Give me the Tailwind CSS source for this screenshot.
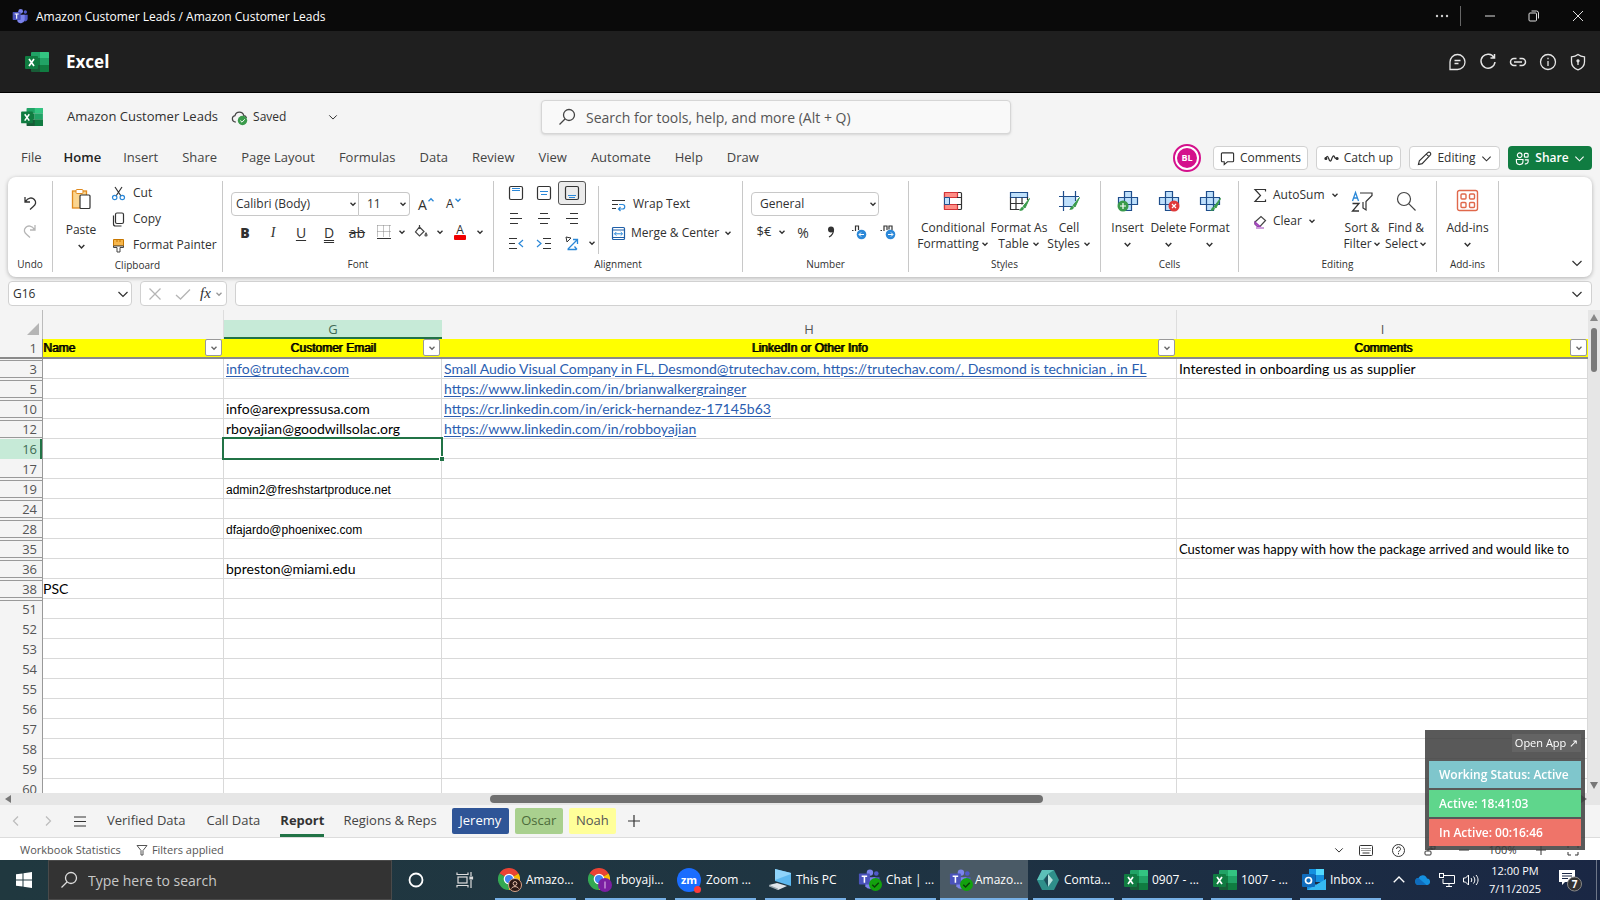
<!DOCTYPE html>
<html lang="en">
<head>
<meta charset="utf-8">
<title>Amazon Customer Leads</title>
<script src="https://cdn.jsdelivr.net/npm/@tailwindcss/browser@4"></script>
</head>
<body class="font-['Open_Sans','Noto_Sans',sans-serif] text-[12px] text-[#303030] bg-[#f4f4f4]">
<svg class="hidden" xmlns="http://www.w3.org/2000/svg">
  <symbol id="cv" viewBox="0 0 8 8"><path d="M1.5 2.7 4 5.3 6.5 2.7" fill="none" stroke="currentColor" stroke-width="1.3"/></symbol>
  <symbol id="chev" viewBox="0 0 12 12"><path d="M1.5 4 6 8.5 10.500 4" fill="none" stroke="currentColor" stroke-width="1.200"/></symbol>
  <symbol id="find" viewBox="0 0 20 20"><g fill="none" stroke="currentColor" stroke-width="1.300"><circle cx="12" cy="8" r="5.500"/><path d="M8 12 2.500 17.500"/></g></symbol>
  <symbol id="excel" viewBox="0 0 24 22">
    <path d="M7 1h16a1 1 0 0 1 1 1v5H6V2a1 1 0 0 1 1-1z" fill="#21a366"/><path d="M15 1h8a1 1 0 0 1 1 1v5h-9z" fill="#33c481"/>
    <path d="M6 7h9v7H6z" fill="#107c41"/><path d="M15 7h9v7h-9z" fill="#21a366"/><path d="M6 14h18v6a1 1 0 0 1-1 1H7a1 1 0 0 1-1-1z" fill="#185c37"/><path d="M15 14h9v6a1 1 0 0 1-1 1h-8z" fill="#107c41"/>
    <rect x="0" y="5" width="13" height="13" rx="1" fill="#107c41"/><path d="M4 8l5 7M9 8l-5 7" stroke="#fff" stroke-width="1.700"/>
  </symbol>
  <symbol id="teams" viewBox="0 0 24 24">
    <circle cx="13" cy="5" r="3.500" fill="#7b83eb"/><circle cx="20" cy="6" r="2.500" fill="#5059c9"/>
    <path d="M16 10h7.500v6a4 4 0 0 1-6 3.500z" fill="#5059c9"/><path d="M8 10h11v7a6 6 0 0 1-11 3z" fill="#7b83eb"/>
    <rect x="1" y="6" width="12" height="12" rx="1" fill="#4b53bc"/><path d="M4 9h6M7 9v7" stroke="#fff" stroke-width="1.700"/>
  </symbol>
  <symbol id="ok" viewBox="0 0 14 14"><circle cx="7" cy="7" r="7" fill="#13a10e"/><path d="M3.500 7.200 6 9.600 10.500 5" fill="none" stroke="#0b3d0a" stroke-width="1.500"/></symbol>
  <symbol id="chrome" viewBox="0 0 24 24">
    <path d="M12 12 1.600 6A12 12 0 0 1 22.400 6z" fill="#ea4335"/><path d="M12 12 22.400 6A12 12 0 0 1 12 24z" fill="#fbbc04"/><path d="M12 12V24A12 12 0 0 1 1.600 6z" fill="#34a853"/>
    <circle cx="12" cy="12" r="5.800" fill="#fff"/><circle cx="12" cy="12" r="4.500" fill="#4285f4"/>
  </symbol>
  <symbol id="cross" viewBox="0 0 24 24"><path d="M8.500 2.500h7v6h6v7h-6v6h-7v-6h-6v-7h6z" fill="#bfe0fb"/><path d="M8.500 2.500h7v19h-7zM2.500 8.500h19v7h-19z" fill="none" stroke="#1f4e8c" stroke-width="1.200"/></symbol>
  <symbol id="brush" viewBox="0 0 12 14"><path d="M11.500 0.500 5 8.500 7 10z" fill="#3a9b4b" stroke="#3a9b4b"/><path d="M1 13c1.500-.5 1-4 3.500-4 2 0 2.500 4-3.500 4z" fill="#3a9b4b"/></symbol>
</svg>

<div class="flex h-screen w-full flex-col overflow-hidden">

  <!-- Window title bar -->
  <header class="flex h-[31px] shrink-0 items-center bg-[#0a0a0a] text-white">
    <svg class="ml-3 mt-px size-4"><use href="#teams"/></svg>
    <span class="ml-2 mt-[2px] text-[12px]">Amazon Customer Leads / Amazon Customer Leads</span>
    <div class="ml-auto flex h-full items-center">
      <button aria-label="More" class="flex w-9 justify-center"><svg class="h-4 w-4" viewBox="0 0 16 16" fill="#ccc"><circle cx="3" cy="8" r="1.200"/><circle cx="8" cy="8" r="1.200"/><circle cx="13" cy="8" r="1.200"/></svg></button>
      <span class="mr-[7px] h-5 w-px bg-[#666]"></span>
      <button aria-label="Minimize" class="flex w-11 justify-center"><svg class="h-4 w-4" viewBox="0 0 16 16"><path d="M3 8h10" stroke="#ddd"/></svg></button>
      <button aria-label="Restore" class="flex w-11 justify-center"><svg class="h-4 w-4" viewBox="0 0 16 16" fill="none" stroke="#ddd"><rect x="3" y="5" width="7.500" height="8" rx="1"/><path d="M5.500 3h5a2 2 0 0 1 2 2v5.500"/></svg></button>
      <button aria-label="Close" class="flex w-11 justify-center"><svg class="h-4 w-4" viewBox="0 0 16 16"><path d="M3 3l10 10M13 3 3 13" stroke="#ddd"/></svg></button>
    </div>
  </header>

  <!-- App header -->
  <div class="flex h-[62px] shrink-0 items-center border-b border-black bg-[#1f1f1f] text-white">
    <svg class="ml-[25px] h-[22px] w-6"><use href="#excel"/></svg>
    <h1 class="ml-[17px] text-[17px] font-bold">Excel</h1>
    <div class="ml-auto mr-[11px] flex gap-[8px] text-[#e6e6e6]">
      <button aria-label="Chat" class="size-[22px]"><svg viewBox="0 0 22 22" fill="none" stroke="currentColor" stroke-width="1.300"><path d="M3 18.500V11A7.500 7.500 0 1 1 10.500 18.500zM7.500 9.500h6M7.500 12.500h4"/></svg></button>
      <button aria-label="Refresh" class="size-[22px]"><svg viewBox="0 0 22 22" fill="none" stroke="currentColor" stroke-width="1.500"><path d="M17 6.500A7 7 0 1 0 18 11M17.500 3v4h-4"/></svg></button>
      <button aria-label="Copy link" class="size-[22px]"><svg viewBox="0 0 22 22" fill="none" stroke="currentColor" stroke-width="1.500"><path d="M9.500 7.500H7a3.500 3.500 0 0 0 0 7h2.500M12.500 7.500H15a3.500 3.500 0 0 1 0 7h-2.500M7 11h8"/></svg></button>
      <button aria-label="About" class="size-[22px]"><svg viewBox="0 0 22 22" fill="none" stroke="currentColor" stroke-width="1.300"><circle cx="11" cy="11" r="7.500"/><path d="M11 10v5M11 6.800v1.500"/></svg></button>
      <button aria-label="Privacy" class="size-[22px]"><svg viewBox="0 0 22 22" fill="none" stroke="currentColor" stroke-width="1.300"><path d="M11 3.500c2 1.700 4 2.300 6.500 2.300V11c0 4-2.500 6.300-6.500 7.800C7 17.300 4.500 15 4.500 11V5.800C7 5.800 9 5.200 11 3.500z"/><circle cx="11" cy="9.800" r="1" fill="currentColor"/><path d="M11 10v4"/></svg></button>
    </div>
  </div>

  <!-- Document title and search -->
  <div class="flex h-12 shrink-0 items-center">
    <div class="flex min-w-0 flex-1 items-center">
      <svg class="ml-[21px] h-5 w-[22px] shrink-0"><use href="#excel"/></svg>
      <span class="ml-6 whitespace-nowrap text-[13px]">Amazon Customer Leads</span>
      <svg class="ml-[13px] h-[17px] w-[17px] shrink-0" viewBox="0 0 17 17"><path d="M5 13H4a3.200 3.200 0 0 1 0-6.300 4.500 4.500 0 0 1 8.800 0A3 3 0 0 1 15.500 9" fill="none" stroke="#444" stroke-width="1.200"/><circle cx="11.500" cy="11.500" r="4.700" fill="#3a9b4b"/><path d="M9.300 11.600 11 13.200l2.700-2.900" fill="none" stroke="#fff"/></svg>
      <span class="ml-[5px] text-[12px]">Saved</span>
      <button aria-label="Document options" class="ml-[42px]"><svg class="size-[10px]"><use href="#chev"/></svg></button>
    </div>
    <label class="flex h-[34px] w-[470px] items-center rounded border border-[#d6d6d6] bg-[#f9f9f9] pl-[15px] shadow-sm">
      <svg class="size-5 text-[#444]"><use href="#find"/></svg>
      <input type="text" aria-label="Search" placeholder="Search for tools, help, and more (Alt + Q)" class="ml-[9px] flex-1 bg-transparent text-[14px] outline-none placeholder:text-[#555]">
    </label>
    <div class="flex-1"></div>
    <div class="w-12"></div>
  </div>

  <!-- Ribbon tabs -->
  <div class="mt-px flex h-8 shrink-0 items-center">
    <nav class="ml-[21px] flex gap-6 whitespace-nowrap text-[13px] text-[#444]">
      <a href="#">File</a><a href="#" class="-mx-[2px] font-semibold text-[#222]">Home</a><a href="#">Insert</a><a href="#">Share</a><a href="#">Page Layout</a><a href="#">Formulas</a><a href="#">Data</a><a href="#">Review</a><a href="#">View</a><a href="#">Automate</a><a href="#">Help</a><a href="#">Draw</a>
    </nav>
    <div class="ml-auto mr-2 flex items-center gap-2 text-[12px]">
      <span class="mr-1 flex size-7 items-center justify-center rounded-full border-2 border-[#d4118c] bg-white"><span class="flex size-5 items-center justify-center rounded-full bg-[#d4118c] text-[9px] font-bold text-white">BL</span></span>
      <button class="flex h-6 w-[95px] items-center justify-center gap-[5px] rounded border border-[#d1d1d1] bg-white"><svg class="size-[15px]" viewBox="0 0 16 16" fill="none" stroke="currentColor" stroke-width="1.200"><path d="M2.500 2h11a1 1 0 0 1 1 1v7.500a1 1 0 0 1-1 1H8L4.500 14.500v-3h-2a1 1 0 0 1-1-1V3a1 1 0 0 1 1-1z"/></svg>Comments</button>
      <button class="flex h-6 w-[85px] items-center justify-center gap-[5px] rounded border border-[#d1d1d1] bg-white"><svg class="size-[15px]" viewBox="0 0 16 16" fill="none" stroke="currentColor" stroke-width="1.300"><path d="M2 8c1-3 2-3 3 0s2 4 3 1 2-5 3-3 1 2 3 2"/><circle cx="2" cy="8" r="1" fill="currentColor"/><circle cx="14" cy="8" r="1" fill="currentColor"/></svg>Catch up</button>
      <button class="flex h-6 w-[91px] items-center justify-center gap-[5px] rounded border border-[#d1d1d1] bg-white"><svg class="size-[15px]" viewBox="0 0 16 16" fill="none" stroke="currentColor" stroke-width="1.200"><path d="M1.500 14.500l1-4L11.500 1.800a1.800 1.800 0 0 1 2.600 2.600L5.500 13.500zM10 3.300l2.700 2.700"/></svg>Editing<svg class="size-[11px]"><use href="#chev"/></svg></button>
      <button class="flex h-6 w-[84px] items-center justify-center gap-[5px] rounded bg-[#107c41] font-semibold text-white"><svg class="size-[15px]" viewBox="0 0 16 16" fill="none" stroke="currentColor" stroke-width="1.200"><circle cx="5" cy="4.500" r="2.500"/><rect x="10" y="2.500" width="4" height="4" rx="1"/><path d="M1.500 9h7v2a3.500 3.500 0 0 1-7 0zM10.500 9.500H14v2a2.500 2.500 0 0 1-3.500 2"/></svg>Share<svg class="size-[11px]"><use href="#chev"/></svg></button>
    </div>
  </div>

  <!-- Ribbon -->
  <section class="mx-2 mt-[3px] flex h-[100px] shrink-0 rounded-lg bg-white pb-[5px] pt-1 text-[12px] shadow-[0_1px_4px_rgba(0,0,0,0.28)]">
    <div class="flex w-[45px] flex-col items-center border-r border-[#c8c8c8] pt-2">
      <button aria-label="Undo" class="flex h-7 items-center"><svg class="h-[16px] w-[14px]" viewBox="0 0 14 16" fill="none" stroke="#333" stroke-width="1.300"><path d="M2 2v5h5M2.300 6.800C5 2.500 9 2 11.300 4.500s1.500 5-1 7L7 14.500"/></svg></button>
      <button aria-label="Redo" class="flex h-7 items-center"><svg class="h-[16px] w-[14px]" viewBox="0 0 14 16" fill="none" stroke="#b5b5b5" stroke-width="1.300"><path d="M12 2v5H7M11.700 6.800C9 2.500 5 2 2.700 4.500s-1.500 5 1 7L7 14.500"/></svg></button>
      <span class="mt-auto text-[10px] leading-4">Undo</span>
    </div>
    <div class="flex w-[170px] flex-col border-r border-[#c8c8c8]">
      <div class="flex flex-1">
        <button class="ml-2 flex w-10 flex-col items-center pt-[7px] leading-4">
          <svg class="h-[22px] w-5" viewBox="0 0 20 22"><rect x="1.500" y="3" width="14" height="17" fill="#fbd58f" stroke="#e08a1e" stroke-width="1.300"/><rect x="5" y="1.500" width="7" height="4" rx="1" fill="#fff" stroke="#e08a1e"/><rect x="9" y="7" width="10" height="13.500" rx="1" fill="#fff" stroke="#333" stroke-width="1.200"/></svg>
          <span class="mt-3">Paste</span><svg class="mt-1 size-[9px]"><use href="#cv"/></svg>
        </button>
        <div class="ml-[10px] flex flex-col gap-[2px]">
          <button class="flex h-6 items-center gap-[7px]"><svg class="size-[15px]" viewBox="0 0 15 15" fill="none" stroke-width="1.200"><path d="M4 1l6 9M11 1 5 10" stroke="#333"/><circle cx="3.700" cy="11.500" r="2.200" stroke="#2b88d8"/><circle cx="11.300" cy="11.500" r="2.200" stroke="#2b88d8"/></svg>Cut</button>
          <button class="flex h-6 items-center gap-[7px]"><svg class="size-[15px]" viewBox="0 0 15 15" fill="none" stroke="#333" stroke-width="1.200"><rect x="4.500" y="1" width="8" height="10.500" rx="1.500"/><path d="M2.500 3.500v8.500a2 2 0 0 0 2 2h6"/></svg>Copy</button>
          <button class="flex h-6 items-center gap-[7px] whitespace-nowrap"><svg class="size-[15px]" viewBox="0 0 15 15"><path d="M2.500 1.500h10V8h-10z" fill="#f6b64b" stroke="#c77700"/><path d="M6 1v3M9 1v3" stroke="#c77700"/><path d="M2.500 8h10v1.500H9V14H6V9.500H2.500z" fill="#fff" stroke="#444"/></svg>Format Painter</button>
        </div>
      </div>
      <span class="text-center text-[10px] leading-4">Clipboard</span>
    </div>
    <div class="flex w-[271px] flex-col border-r border-[#c8c8c8]">
      <div class="flex-1 pl-2 pt-[11px]">
        <div class="flex h-6 items-center">
          <span class="relative"><select aria-label="Font" class="h-6 w-[128px] appearance-none rounded-l border border-[#c8c8c8] pl-1"><option>Calibri (Body)</option></select><svg class="absolute right-[2px] top-2 size-2"><use href="#cv"/></svg></span>
          <span class="relative"><select aria-label="Font size" class="h-6 w-[51px] appearance-none rounded-r border border-l-0 border-[#c8c8c8] pl-2"><option>11</option></select><svg class="absolute right-[3px] top-2 size-2"><use href="#cv"/></svg></span>
          <button aria-label="Increase font size" class="ml-2 flex w-[16px] items-center text-[14px]">A<svg class="mb-2 size-2 shrink-0 rotate-180 text-[#2b88d8]"><use href="#cv"/></svg></button>
          <button aria-label="Decrease font size" class="ml-3 flex w-[16px] items-center text-[12px]">A<svg class="mb-2 size-2 shrink-0 text-[#2b88d8]"><use href="#cv"/></svg></button>
        </div>
        <div class="mt-1 flex h-6 items-center text-[14px]">
          <button class="w-7 font-extrabold">B</button><button class="w-7 font-['Liberation_Serif',serif] italic">I</button><button class="w-7 underline underline-offset-2">U</button><button class="w-7 underline decoration-double underline-offset-2">D</button><button class="w-7 line-through">ab</button>
          <button aria-label="Borders" class="flex w-[26px] justify-center"><svg class="size-[14px]" viewBox="0 0 14 14" fill="none" stroke="#888"><path d="M.5 .5h13M.5 6.500h13M.5 .5v12M6.500 .5v12M12.500 .5v12" stroke-dasharray="1 1"/><path d="M0 13.500h14" stroke="#333"/></svg></button>
          <button aria-label="Border options" class="flex w-[10px] justify-center"><svg class="size-2"><use href="#cv"/></svg></button>
          <button aria-label="Fill colour" class="flex w-7 justify-center"><svg class="size-[14px]" viewBox="0 0 14 14" fill="none" stroke="#444" stroke-width="1.200"><path d="M5.500 2 10 6.500 5.500 11 1.500 7zM5.500 0v4M12 8c1.300 1.800 1.300 3 0 3s-1.300-1.200 0-3z"/></svg></button>
          <button aria-label="Fill options" class="flex w-[10px] justify-center"><svg class="size-2"><use href="#cv"/></svg></button>
          <button aria-label="Font colour" class="flex w-[30px] flex-col items-center text-[12px] leading-[11px]">A<span class="h-[5px] w-3 rounded-[1px] bg-[#f00000]"></span></button>
          <button aria-label="Font colour options" class="flex w-[10px] justify-center"><svg class="size-2"><use href="#cv"/></svg></button>
        </div>
      </div>
      <span class="text-center text-[10px] leading-4">Font</span>
    </div>
    <div class="flex w-[249px] flex-col border-r border-[#c8c8c8]">
      <div class="flex flex-1 pl-2">
        <div class="grid w-[96px] grid-cols-[28px_28px_28px_12px] content-start gap-y-px">
          <button aria-label="Top align" class="flex h-6 items-center justify-center"><svg class="size-4" viewBox="0 0 16 16" fill="none"><rect x="1.500" y="1.500" width="13" height="13" rx="1.500" stroke="#333" stroke-width="1.200"/><path d="M4 3.500h8M4 5.500h8" stroke="#2b88d8"/></svg></button>
          <button aria-label="Middle align" class="flex h-6 items-center justify-center"><svg class="size-4" viewBox="0 0 16 16" fill="none"><rect x="1.500" y="1.500" width="13" height="13" rx="1.500" stroke="#333" stroke-width="1.200"/><path d="M4 6.500h8M5 9.500h6" stroke="#2b88d8"/></svg></button>
          <button aria-label="Bottom align" class="flex h-6 items-center justify-center rounded-[3px] border border-[#555] bg-[#ebebeb]"><svg class="size-4" viewBox="0 0 16 16" fill="none"><rect x="1.500" y="1.500" width="13" height="13" rx="1.500" stroke="#333" stroke-width="1.200"/><path d="M4 10.500h8M5 12.500h6" stroke="#2b88d8"/></svg></button><span></span>
          <button aria-label="Align left" class="flex h-6 items-center justify-center"><svg class="size-[14px]" viewBox="0 0 14 14" stroke="#333"><path d="M1 2.500h8M1 7.500h12M1 12.500h8"/></svg></button>
          <button aria-label="Centre" class="flex h-6 items-center justify-center"><svg class="size-[14px]" viewBox="0 0 14 14" stroke="#333"><path d="M3 2.500h8M1 7.500h12M3 12.500h8"/></svg></button>
          <button aria-label="Align right" class="flex h-6 items-center justify-center"><svg class="size-[14px]" viewBox="0 0 14 14" stroke="#333"><path d="M5 2.500h8M1 7.500h12M5 12.500h8"/></svg></button><span></span>
          <button aria-label="Decrease indent" class="flex h-6 items-center justify-center"><svg class="size-4" viewBox="0 0 16 16" fill="none" stroke="#333"><path d="M1 3.500h8M1 8.500h6M1 13.500h8"/><path d="M15 5l-4 3.500 4 3.500" stroke="#2b88d8" stroke-width="1.200"/></svg></button>
          <button aria-label="Increase indent" class="flex h-6 items-center justify-center"><svg class="size-4" viewBox="0 0 16 16" fill="none" stroke="#333"><path d="M7 3.500h8M9 8.500h6M7 13.500h8"/><path d="M1 5l4 3.500L1 12" stroke="#2b88d8" stroke-width="1.200"/></svg></button>
          <button aria-label="Orientation" class="flex h-6 items-center justify-center"><svg class="size-4" viewBox="0 0 16 16" fill="none" stroke="#2b88d8" stroke-width="1.300"><path d="M4 14 13 5M9 4.500h4.500V9M3.500 14.500h9M10.500 11.500l2.500 3"/><path d="M2 2l5 1-4 4z" stroke="#333" stroke-width="1"/></svg></button>
          <button aria-label="Orientation options" class="flex h-6 items-center justify-center"><svg class="size-2"><use href="#cv"/></svg></button>
        </div>
        <div class="mt-[5px] h-[68px] border-l border-[#c8c8c8] pl-3 pt-[6px]">
          <button class="flex h-6 items-center gap-[7px] whitespace-nowrap"><svg class="size-[15px]" viewBox="0 0 15 15" fill="none"><path d="M1 3.500h13M1 7.500h6M1 11.500h4" stroke="#333"/><path d="M8 7.500h3.500a2.200 2.200 0 0 1 0 4.500H8M9.500 10 7.500 12l2 2" stroke="#2b88d8" stroke-width="1.200"/></svg>Wrap Text</button>
          <button class="mt-[5px] flex h-6 items-center gap-[5px] whitespace-nowrap"><svg class="size-[15px]" viewBox="0 0 15 15" fill="none"><rect x="1.500" y="1.500" width="12" height="12" rx="1" stroke="#1f5fa8" stroke-width="1.200"/><path d="M1.500 4h12M1.500 11.500h12" stroke="#1f5fa8"/><path d="M3.500 7.800h8M5.300 6 3.500 7.800l1.800 1.800M9.700 6l1.800 1.800-1.800 1.800" stroke="#2b88d8"/></svg>Merge &amp; Center<svg class="size-2"><use href="#cv"/></svg></button>
        </div>
      </div>
      <span class="text-center text-[10px] leading-4">Alignment</span>
    </div>
    <div class="flex w-[166px] flex-col border-r border-[#c8c8c8]">
      <div class="flex-1 pl-2 pt-[11px]">
        <div class="relative h-6 w-[128px]"><select aria-label="Number format" class="h-6 w-full appearance-none rounded border border-[#c8c8c8] pl-2"><option>General</option></select><svg class="absolute right-[2px] top-2 size-2"><use href="#cv"/></svg></div>
        <div class="mt-1 flex h-6 items-center text-[13px]">
          <button class="w-[26px]">$€</button><button aria-label="Currency options" class="flex w-[10px] justify-center"><svg class="size-2"><use href="#cv"/></svg></button><button class="w-8 text-[14px]">%</button>
          <button aria-label="Comma style" class="flex w-6 justify-center"><svg class="h-3 w-2" viewBox="0 0 8 12"><circle cx="4" cy="3.500" r="3" fill="#333"/><path d="M6.500 3.500C6.500 7.500 5 9.500 2 11" fill="none" stroke="#333" stroke-width="1.300"/></svg></button>
          <button aria-label="Increase decimal" class="flex w-8 justify-center"><svg class="size-4" viewBox="0 0 16 16" fill="none"><path d="M1 6.500h1.500M4.500 7v-5h3v4" stroke="#333" stroke-width="1.200"/><circle cx="10.500" cy="10.500" r="4.800" fill="#2b88d8"/><path d="M13 10.500H8.200M10 8.500l-2 2 2 2" stroke="#fff"/></svg></button>
          <button aria-label="Decrease decimal" class="flex w-[26px] justify-center"><svg class="size-4" viewBox="0 0 16 16" fill="none"><path d="M.5 6.500H2M4 7v-5h3v4M9 5.500V2h3v4" stroke="#333" stroke-width="1.200"/><circle cx="10.500" cy="10.500" r="4.800" fill="#2b88d8"/><path d="M8 10.500h4.800M11 8.500l2 2-2 2" stroke="#fff"/></svg></button>
        </div>
      </div>
      <span class="text-center text-[10px] leading-4">Number</span>
    </div>
    <div class="flex w-[192px] flex-col border-r border-[#c8c8c8]">
      <div class="flex flex-1 pl-2 pt-2 leading-4">
        <button class="flex w-[72px] flex-col items-center"><svg class="mb-[7px] size-6" viewBox="0 0 24 24"><rect x="3.500" y="3.500" width="17" height="17" rx="1" fill="#fff" stroke="#333" stroke-width="1.200"/><path d="M3.500 3.500h13v5h-13zM3.500 15.500h13v5h-13z" fill="#ff8d85" stroke="#d13438" stroke-width="1.200"/><path d="M3.500 8.500h5v7h-5z" fill="#bfe0fb" stroke="#1f4e8c"/><path d="M16 8.500h4.500M16 15.500h4.500" stroke="#333"/></svg><span>Conditional</span><span class="flex items-center gap-[2px]">Formatting<svg class="size-2"><use href="#cv"/></svg></span></button>
        <button class="flex w-[60px] flex-col items-center whitespace-nowrap"><svg class="mb-[7px] size-6" viewBox="0 0 24 24"><path d="M3.500 3.500h17v5h-17z" fill="#bfe0fb" stroke="#1f4e8c" stroke-width="1.200"/><path d="M3.500 8.500v12h9M3.500 14.500h13M9 8.500v12M15 8.500v7M20.500 8v3" fill="none" stroke="#333" stroke-width="1.200"/><use href="#brush" x="11" y="9" width="12" height="14"/></svg><span>Format As</span><span class="flex items-center gap-[3px]">Table<svg class="size-2"><use href="#cv"/></svg></span></button>
        <button class="flex w-10 flex-col items-center"><svg class="mb-[7px] size-6" viewBox="0 0 24 24"><path d="M6 8h13v9H6z" fill="#bfe0fb"/><path d="M6.500 2v20M18.500 2v10M2 7.500h20M2 17.500h13" fill="none" stroke="#1f4e8c" stroke-width="1.200"/><use href="#brush" x="11" y="8" width="12" height="14"/></svg><span>Cell</span><span class="flex items-center gap-[3px]">Styles<svg class="size-2"><use href="#cv"/></svg></span></button>
      </div>
      <span class="text-center text-[10px] leading-4">Styles</span>
    </div>
    <div class="flex w-[138px] flex-col border-r border-[#c8c8c8]">
      <div class="flex flex-1 pl-[6px] pt-2 leading-4">
        <button class="flex w-[41px] flex-col items-center"><svg class="mb-[7px] size-6" viewBox="0 0 24 24"><use href="#cross"/><circle cx="7" cy="17" r="5.500" fill="#3a9b4b"/><path d="M7 14v6M4 17h6" stroke="#fff" stroke-width="1.200"/></svg>Insert<svg class="mt-1 size-[9px]"><use href="#cv"/></svg></button>
        <button class="flex w-[41px] flex-col items-center"><svg class="mb-[7px] size-6" viewBox="0 0 24 24"><use href="#cross"/><circle cx="17" cy="17" r="5.500" fill="#e03a3a"/><path d="M15 15l4 4M19 15l-4 4" stroke="#fff" stroke-width="1.200"/></svg>Delete<svg class="mt-1 size-[9px]"><use href="#cv"/></svg></button>
        <button class="flex w-[41px] flex-col items-center"><svg class="mb-[7px] size-6" viewBox="0 0 24 24"><use href="#cross"/><use href="#brush" x="11" y="9" width="12" height="14"/></svg>Format<svg class="mt-1 size-[9px]"><use href="#cv"/></svg></button>
      </div>
      <span class="text-center text-[10px] leading-4">Cells</span>
    </div>
    <div class="flex w-[198px] flex-col border-r border-[#c8c8c8]">
      <div class="flex flex-1 pl-[14px] leading-4">
        <div class="flex w-[87px] flex-col gap-[2px] pt-[2px]">
          <button class="flex h-6 items-center gap-[6px]"><svg class="h-[15px] w-[14px]" viewBox="0 0 14 15" fill="none" stroke="#333" stroke-width="1.200"><path d="M12.500 3.500V1.500H2l5.500 6L2 13.500h10.500v-2"/></svg>AutoSum<svg class="size-2"><use href="#cv"/></svg></button>
          <button class="flex h-6 items-center gap-[6px]"><svg class="h-[15px] w-[14px]" viewBox="0 0 14 15" fill="none" stroke-width="1.200"><path d="M2 8l6-5.500 4.500 4L7 12.500H4.500L2 10z" stroke="#444"/><path d="M2 8l5 4.500H4.500L2 10zM3 14h8" fill="#c58ad6" stroke="#9b3fb5"/></svg>Clear<svg class="size-2"><use href="#cv"/></svg></button>
        </div>
        <button class="flex w-11 flex-col items-center whitespace-nowrap pt-2"><svg class="mb-[7px] size-6" viewBox="0 0 24 24" fill="none"><path d="M10 4h12v2.500l-6 6V21l-3-2v-6" stroke="#333" stroke-width="1.200"/><path d="M2.500 12 5.500 3.500 8.500 12M3.500 9h4" stroke="#2b88d8" stroke-width="1.300"/><path d="M2.500 14.500H9L2.500 22H9" stroke="#333" stroke-width="1.300"/></svg><span>Sort &amp;</span><span class="flex items-center gap-px">Filter<svg class="size-2"><use href="#cv"/></svg></span></button>
        <button class="flex w-11 flex-col items-center whitespace-nowrap pt-2"><svg class="mb-[7px] size-6" viewBox="0 0 24 24" fill="none" stroke="#444" stroke-width="1.200"><circle cx="10" cy="10" r="6.500"/><path d="M14.700 14.700 21.500 21.500"/></svg><span>Find &amp;</span><span class="flex items-center gap-px">Select<svg class="size-2"><use href="#cv"/></svg></span></button>
      </div>
      <span class="text-center text-[10px] leading-4">Editing</span>
    </div>
    <div class="flex w-[62px] flex-col border-r border-[#c8c8c8]">
      <button class="flex flex-1 flex-col items-center pt-2 leading-4"><svg class="mb-[7px] size-6" viewBox="0 0 24 24" fill="none" stroke="#e0684b" stroke-width="1.400"><rect x="1.500" y="1.500" width="20" height="20" rx="2"/><rect x="5" y="5" width="5" height="5" rx="1"/><rect x="13.500" y="5" width="5" height="5" rx="1"/><rect x="5" y="13.500" width="5" height="5" rx="1"/><rect x="13.500" y="13.500" width="5" height="5" rx="1"/></svg>Add-ins<svg class="mt-1 size-[9px]"><use href="#cv"/></svg></button>
      <span class="text-center text-[10px] leading-4">Add-ins</span>
    </div>
    <button aria-label="Collapse ribbon" class="mb-[3px] ml-auto mr-[9px] self-end"><svg class="size-3"><use href="#chev"/></svg></button>
  </section>

  <!-- Formula bar -->
  <div class="mx-2 mt-1 flex h-[25px] shrink-0">
    <div class="flex w-[124px] items-center rounded border border-[#d1d1d1] bg-white pr-[2px]"><input aria-label="Name box" value="G16" class="w-full min-w-0 pl-1 text-[12px] outline-none"><svg class="size-3 shrink-0"><use href="#chev"/></svg></div>
    <div class="ml-2 flex w-[87px] items-center rounded border border-[#d1d1d1] bg-white pl-[7px]">
      <button aria-label="Cancel"><svg class="size-[14px]" viewBox="0 0 14 14"><path d="M1.500 1.500l11 11M12.500 1.500l-11 11" stroke="#b5b5b5" stroke-width="1.300"/></svg></button>
      <button aria-label="Enter" class="ml-[13px]"><svg class="h-[14px] w-4" viewBox="0 0 16 14"><path d="M1 8l4.500 4L15 2.500" fill="none" stroke="#b5b5b5" stroke-width="1.300"/></svg></button>
      <button class="ml-[9px] font-['Liberation_Serif',serif] text-[15px] italic">fx</button>
      <svg class="ml-1 size-2 text-[#999]"><use href="#cv"/></svg>
    </div>
    <div class="ml-2 flex flex-1 items-center rounded border border-[#d1d1d1] bg-white pr-2"><input aria-label="Formula" class="h-full flex-1 outline-none"><svg class="size-3"><use href="#chev"/></svg></div>
  </div>

  <!-- Grid -->
  <main class="mt-1 flex min-h-0 flex-1">
    <div class="min-w-0 flex-1 overflow-hidden bg-white">
      <table class="w-full table-fixed border-separate border-spacing-0 whitespace-nowrap text-left font-['Lato','Open_Sans',sans-serif] text-[14px] text-black
        [&_td]:h-5 [&_td]:overflow-hidden [&_td]:border-b [&_td]:border-r [&_td]:border-[#d9d9d9] [&_td]:p-0 [&_td]:pl-[2px] [&_td]:leading-[18px]
        [&_tbody_th]:h-5 [&_tbody_th]:border-r [&_tbody_th]:border-[#999] [&_tbody_th]:bg-[#f4f4f4] [&_tbody_th]:p-0 [&_tbody_th]:font-['Open_Sans'] [&_tbody_th]:text-[13px] [&_tbody_th]:font-normal [&_tbody_th]:leading-[16px] [&_tbody_th]:text-[#555]">
        <colgroup><col class="w-[43px]"><col class="w-[181px]"><col class="w-[218px]"><col class="w-[735px]"><col></colgroup>
        <thead class="font-['Open_Sans']">
          <tr class="bg-[#f4f4f4] text-center text-[13px] leading-[18px] text-[#555]">
            <th class="h-[29px] border-r border-[#bbb] p-0 align-bottom"><svg class="mb-1 ml-auto mr-[3px] size-3" viewBox="0 0 12 12"><path d="M12 0v12H0z" fill="#b5b5b5"/></svg></th>
            <th class="border-r border-[#ddd] p-0"></th>
            <th class="p-0 align-bottom font-normal"><div class="h-[19px] border-b-2 border-[#217346] bg-[#c6ead7] text-[#3f6b55]">G</div></th>
            <th class="border-r border-[#ddd] p-0 pb-px align-bottom font-normal">H</th>
            <th class="p-0 pb-px align-bottom font-normal">I</th>
          </tr>
          <tr class="bg-[#ffff00] font-['Liberation_Sans',sans-serif] text-[12px] leading-[18px] [&>th]:h-5 [&>th]:border-b-2 [&>th]:border-[#8a8a8a] [&>th]:p-0 [&>th]:font-normal">
            <th class="border-r bg-[#f4f4f4] font-['Open_Sans'] text-[13px] text-[#555]"><div class="pr-[5px] text-right">1</div></th>
            <th><div class="flex justify-between pr-[2px]"><span class="[text-shadow:1px_0_0_#000]">Name</span><button aria-label="Filter name" class="flex size-[17px] items-center justify-center rounded-[2px] border border-[#999] bg-white text-[#666]"><svg class="size-2"><use href="#cv"/></svg></button></div></th>
            <th><div class="flex pr-[2px] text-center"><span class="flex-1 pl-[19px] [text-shadow:1px_0_0_#000]">Customer Email</span><button aria-label="Filter email" class="flex size-[17px] items-center justify-center rounded-[2px] border border-[#999] bg-white text-[#666]"><svg class="size-2"><use href="#cv"/></svg></button></div></th>
            <th><div class="flex pr-[2px] text-center"><span class="flex-1 pl-[19px] [text-shadow:1px_0_0_#000]">LinkedIn or Other Info</span><button aria-label="Filter info" class="flex size-[17px] items-center justify-center rounded-[2px] border border-[#999] bg-white text-[#666]"><svg class="size-2"><use href="#cv"/></svg></button></div></th>
            <th><div class="flex pr-px text-center"><span class="flex-1 pl-[19px] [text-shadow:1px_0_0_#000]">Comments</span><button aria-label="Filter comments" class="flex size-[17px] items-center justify-center rounded-[2px] border border-[#999] bg-white text-[#666]"><svg class="size-2"><use href="#cv"/></svg></button></div></th>
          </tr>
        </thead>
        <tbody>
          <tr><th><div class="border-y border-[#999] pr-[5px] text-right">3</div></th><td></td><td><a href="#" class="text-[#2a5db0] underline underline-offset-2">info@trutechav.com</a></td><td><a href="#" class="text-[#2a5db0] underline underline-offset-2">Small Audio Visual Company in FL, Desmond@trutechav.com, https://trutechav.com/, Desmond is technician , in FL</a></td><td>Interested in onboarding us as supplier</td></tr>
          <tr><th><div class="border-y border-[#999] pr-[5px] text-right">5</div></th><td></td><td></td><td><a href="#" class="text-[#2a5db0] underline underline-offset-2">https://www.linkedin.com/in/brianwalkergrainger</a></td><td></td></tr>
          <tr><th><div class="border-y border-[#999] pr-[5px] text-right">10</div></th><td></td><td>info@arexpressusa.com</td><td><a href="#" class="text-[#2a5db0] underline underline-offset-2">https://cr.linkedin.com/in/erick-hernandez-17145b63</a></td><td></td></tr>
          <tr><th><div class="border-y border-[#999] pr-[5px] text-right">12</div></th><td></td><td>rboyajian@goodwillsolac.org</td><td><a href="#" class="text-[#2a5db0] underline underline-offset-2">https://www.linkedin.com/in/robboyajian</a></td><td></td></tr>
          <tr><th><div class="h-5 border-r-2 border-[#217346] bg-[#c6ead7] pr-[3px] pt-[2px] text-right text-[#3f6b55]">16</div></th><td></td><td class="relative overflow-visible!"><div class="absolute -left-[2px] -right-[2px] -top-[2px] bottom-[-2px] border-2 border-[#217346]"><span class="absolute -bottom-[3px] -right-[3px] size-[5px] border-l border-t border-white bg-[#217346]"></span></div></td><td></td><td></td></tr>
          <tr><th><div class="border-b border-[#999] pr-[5px] pt-px text-right">17</div></th><td></td><td></td><td></td><td></td></tr>
          <tr><th><div class="border-y border-[#999] pr-[5px] text-right">19</div></th><td></td><td class="pt-[3px]! font-['Liberation_Sans',sans-serif] text-[12px] leading-[16px]!">admin2@freshstartproduce.net</td><td></td><td></td></tr>
          <tr><th><div class="border-y border-[#999] pr-[5px] text-right">24</div></th><td></td><td></td><td></td><td></td></tr>
          <tr><th><div class="border-y border-[#999] pr-[5px] text-right">28</div></th><td></td><td class="pt-[3px]! font-['Liberation_Sans',sans-serif] text-[12px] leading-[16px]!">dfajardo@phoenixec.com</td><td></td><td></td></tr>
          <tr><th><div class="border-y border-[#999] pr-[5px] text-right">35</div></th><td></td><td></td><td></td><td class="text-[13px]">Customer was happy with how the package arrived and would like to</td></tr>
          <tr><th><div class="border-y border-[#999] pr-[5px] text-right">36</div></th><td></td><td>bpreston@miami.edu</td><td></td><td></td></tr>
          <tr><th><div class="border-y border-[#999] pr-[5px] text-right">38</div></th><td class="pl-0!">PSC</td><td></td><td></td><td></td></tr>
          <tr><th><div class="border-t border-[#999] pb-px pr-[5px] text-right">51</div></th><td></td><td></td><td></td><td></td></tr>
          <tr><th><div class="pr-[5px] text-right">52</div></th><td></td><td></td><td></td><td></td></tr>
          <tr><th><div class="pr-[5px] text-right">53</div></th><td></td><td></td><td></td><td></td></tr>
          <tr><th><div class="pr-[5px] text-right">54</div></th><td></td><td></td><td></td><td></td></tr>
          <tr><th><div class="pr-[5px] text-right">55</div></th><td></td><td></td><td></td><td></td></tr>
          <tr><th><div class="pr-[5px] text-right">56</div></th><td></td><td></td><td></td><td></td></tr>
          <tr><th><div class="pr-[5px] text-right">57</div></th><td></td><td></td><td></td><td></td></tr>
          <tr><th><div class="pr-[5px] text-right">58</div></th><td></td><td></td><td></td><td></td></tr>
          <tr><th><div class="pr-[5px] text-right">59</div></th><td></td><td></td><td></td><td></td></tr>
          <tr><th><div class="pr-[5px] text-right">60</div></th><td></td><td></td><td></td><td></td></tr>
        </tbody>
      </table>
    </div>
    <div class="flex w-3 flex-col items-center bg-[#e6e6e6] pb-1 pt-1">
      <svg class="h-[7px] w-2" viewBox="0 0 8 7"><path d="M4 0l4 7H0z" fill="#888"/></svg>
      <span class="mt-[7px] h-11 w-[6px] rounded-full bg-[#7a7a7a]"></span>
      <svg class="mt-auto h-[7px] w-2" viewBox="0 0 8 7"><path d="M4 7 8 0H0z" fill="#777"/></svg>
    </div>
  </main>
  <div class="flex h-3 shrink-0 items-center bg-[#e6e6e6] pl-[5px] pr-[13px]">
    <svg class="mr-1 h-2 w-[6px]" viewBox="0 0 6 8"><path d="M6 0v8L0 4z" fill="#777"/></svg>
    <span class="ml-[30%] h-2 w-[35%] rounded-full bg-[#707070]"></span>
    <svg class="ml-auto h-2 w-[6px]" viewBox="0 0 6 8"><path d="M0 0v8l6-4z" fill="#777"/></svg>
  </div>

  <!-- Sheet tabs -->
  <div class="flex h-[33px] shrink-0 items-center border-b border-[#dcdcdc] whitespace-nowrap text-[13px] text-[#444]">
    <button aria-label="Previous sheet" class="ml-[10px]"><svg class="size-3 rotate-90 text-[#bbb]"><use href="#chev"/></svg></button>
    <button aria-label="Next sheet" class="ml-5"><svg class="size-3 -rotate-90 text-[#bbb]"><use href="#chev"/></svg></button>
    <button aria-label="All sheets" class="ml-5"><svg class="size-3" viewBox="0 0 12 12" stroke="#333" stroke-width="1.200"><path d="M0 2h12M0 6.500h12M0 11h12"/></svg></button>
    <button class="ml-[21px]">Verified Data</button>
    <button class="ml-[21px]">Call Data</button>
    <button class="ml-5 h-full border-b-[3px] border-[#217346] pt-[3px] font-bold text-[#333]">Report</button>
    <button class="ml-[19px]">Regions &amp; Reps</button>
    <button class="ml-[15px] h-[26px] w-[57px] rounded-[2px] bg-[#2f5597] text-white">Jeremy</button>
    <button class="ml-[6px] h-[26px] w-12 rounded-[2px] bg-[#a9d08e] text-[#4c6b3a]">Oscar</button>
    <button class="ml-[6px] h-[26px] w-[47px] rounded-[2px] bg-[#ffff99] text-[#555]">Noah</button>
    <button aria-label="New sheet" class="ml-3"><svg class="size-3" viewBox="0 0 12 12" stroke="#333" stroke-width="1.200"><path d="M0 6h12M6 0v12"/></svg></button>
  </div>

  <!-- Status bar -->
  <div class="flex h-[22px] shrink-0 items-center bg-white pt-[2px] text-[11px] text-[#555]">
    <span class="ml-5">Workbook Statistics</span>
    <svg class="ml-[15px] size-3" viewBox="0 0 12 12" fill="none" stroke="#555"><path d="M1 1.500h10L7 6.500V11H5V6.500z"/></svg>
    <span class="ml-1">Filters applied</span>
    <div class="ml-auto mr-[21px] flex items-center text-[#333]">
      <svg class="size-[10px]"><use href="#chev"/></svg>
      <svg class="ml-[15px] h-[11px] w-[14px]" viewBox="0 0 14 11" fill="none" stroke="#333"><rect x=".5" y=".5" width="13" height="10" rx="1"/><path d="M2.500 3.500h9M2.500 5.500h9" stroke-dasharray="1 1"/><path d="M3.500 8h7"/></svg>
      <svg class="ml-[19px] size-[13px]" viewBox="0 0 13 13" fill="none" stroke="#333"><circle cx="6.500" cy="6.500" r="6"/><path d="M4.500 5a2 2 0 1 1 3 1.700c-.7.400-1 .7-1 1.500M6.500 9v1.300"/></svg>
      <svg class="ml-[19px] size-3" viewBox="0 0 12 12" fill="none" stroke="#333"><rect x="1" y="7" width="6" height="4" rx="1"/><path d="M4 7V5h5M7 2h4v3H7z"/></svg>
      <svg class="ml-[22px] size-3" viewBox="0 0 12 12"><path d="M1 6h10" stroke="#333"/></svg>
      <span class="w-[65px] text-center">100%</span>
      <svg class="size-3" viewBox="0 0 12 12"><path d="M1 6h10M6 1v10" stroke="#333"/></svg>
      <svg class="ml-[20px] size-3" viewBox="0 0 12 12" fill="none" stroke="#333"><path d="M1 4V1h3M8 1h3v3M11 8v3H8M4 11H1V8"/></svg>
    </div>
  </div>

  <!-- Taskbar -->
  <footer class="flex h-10 shrink-0 items-center bg-linear-to-r from-[#20383f] via-[#1f3542] to-[#1a2744] text-[12px] text-white">
    <button aria-label="Start" class="flex w-12 justify-center"><svg class="size-4" viewBox="0 0 16 16" fill="#fff"><path d="M0 2.300 6.500 1.400v6.100H0zM7.500 1.200 16 0v7.500H7.500zM0 8.500h6.500v6.100L0 13.700zM7.500 8.500H16V16l-8.500-1.200z"/></svg></button>
    <label class="flex h-full w-[344px] items-center border border-[#4a4a4a] bg-[#333] pl-[10px]"><svg class="size-5 text-[#ddd]"><use href="#find"/></svg><input type="text" aria-label="Taskbar search" placeholder="Type here to search" class="ml-[9px] flex-1 text-[14px] outline-none placeholder:text-[#c8c8c8]"></label>
    <button aria-label="Cortana" class="flex w-12 justify-center"><svg class="size-4" viewBox="0 0 16 16"><circle cx="8" cy="8" r="6.500" fill="none" stroke="#fff" stroke-width="1.800"/></svg></button>
    <button aria-label="Task view" class="flex w-[50px] justify-center"><svg class="size-[18px]" viewBox="0 0 18 18" fill="none" stroke="#ddd" stroke-width="1.200"><path d="M1 1.500v2h11v-2M1 16.500v-2h11v2"/><rect x="2" y="6" width="9" height="6"/><path d="M15 1v4M15 9v8" /><path d="M14 6h2.500v2H14z" fill="#ddd"/></svg></button>
    <div class="flex h-full whitespace-nowrap">
      <button class="flex h-full w-[90px] pl-[5px]"><span class="flex h-full w-[81px] items-center gap-1 border-y-2 border-t-transparent border-b-[#76b0e6] pl-[3px]"><svg class="size-6" viewBox="0 0 24 24"><use href="#chrome" width="22" height="22"/><circle cx="17" cy="17" r="6.500" fill="#2a1714" stroke="#d9a58c"/><circle cx="17" cy="15.500" r="1.900" fill="none" stroke="#e8c0ac"/><path d="M13.500 20.500c1-2.500 6-2.500 7 0" fill="none" stroke="#e8c0ac"/></svg>Amazo...</span></button>
      <button class="flex h-full w-[90px] pl-[5px]"><span class="flex h-full w-[81px] items-center gap-1 border-y-2 border-t-transparent border-b-[#76b0e6] pl-[3px]"><svg class="size-6" viewBox="0 0 24 24"><use href="#chrome" width="22" height="22"/><circle cx="17" cy="17" r="7" fill="#7b1fa2"/><path d="M17 13.500v7" stroke="#e6c6f0"/></svg>rboyaji...</span></button>
      <button class="flex h-full w-[90px] pl-[5px]"><span class="flex h-full w-[81px] items-center gap-[5px] border-y-2 border-t-transparent border-b-[#76b0e6] pl-[2px]"><span class="relative flex size-6 items-center justify-center rounded-full bg-[#1a6dff] text-[11px] font-bold">zm<span class="absolute -bottom-px right-0 size-[7px] rounded-full bg-[#ff3b3b]"></span></span>Zoom ...</span></button>
      <button class="flex h-full w-[90px] pl-[5px]"><span class="flex h-full w-[81px] items-center gap-1 border-y-2 border-t-transparent border-b-[#76b0e6] pl-[3px]"><svg class="size-6" viewBox="0 0 24 24"><path d="M7 1l16 4v13L7 13z" fill="#5cb8ef"/><path d="M7 1l16 4v1L7 12z" fill="#8fd4fa"/><path d="M1 17l8-2 10 3-9 4z" fill="#dfe5ea"/><path d="M1 17l9 3.500v1.500l-9-3.500z" fill="#9aa7b0"/></svg>This PC</span></button>
      <button class="flex h-full w-[90px] pl-[5px]"><span class="flex h-full w-[81px] items-center gap-1 border-y-2 border-t-transparent border-b-[#76b0e6] pl-[3px]"><svg class="size-6" viewBox="0 0 24 24"><use href="#teams" width="22" height="22"/><use href="#ok" x="11" y="10" width="13" height="13"/></svg>Chat | ...</span></button>
      <button class="flex h-full w-[88px] items-center gap-[2px] border-y-2 border-t-[#4a5a66] border-b-[#76b0e6] bg-[#4a5a66] pl-[9px]"><svg class="size-6" viewBox="0 0 24 24"><use href="#teams" width="22" height="22"/><use href="#ok" x="11" y="10" width="13" height="13"/></svg>Amazo...</button>
      <button class="flex h-full w-[89px] pl-[5px]"><span class="flex h-full w-[81px] items-center gap-1 border-y-2 border-t-transparent border-b-[#76b0e6] pl-[3px]"><svg class="size-6" viewBox="0 0 24 24"><path d="M6 2h12l5 10-5 10H6L1 12z" fill="#2f8f8a"/><path d="M6 2h12l-6 4-5 6-6 0z" fill="#5cc0b8"/><path d="M12 6l5 6-5 7-4-7z" fill="#1c4f5c"/><path d="M12 6l5 6-5 7z" fill="#b5e3de"/></svg>Comta...</span></button>
      <button class="flex h-full w-[89px] pl-[5px]"><span class="flex h-full w-[81px] items-center gap-1 border-y-2 border-t-transparent border-b-[#76b0e6] pl-[2px]"><svg class="h-[22px] w-6"><use href="#excel"/></svg>0907 - ...</span></button>
      <button class="flex h-full w-[89px] pl-[5px]"><span class="flex h-full w-[81px] items-center gap-1 border-y-2 border-t-transparent border-b-[#76b0e6] pl-[2px]"><svg class="h-[22px] w-6"><use href="#excel"/></svg>1007 - ...</span></button>
      <button class="flex h-full w-[89px] pl-[5px]"><span class="flex h-full w-[81px] items-center gap-1 border-y-2 border-t-transparent border-b-[#76b0e6] pl-[2px]"><svg class="size-6" viewBox="0 0 24 24"><path d="M7 1h15v13H7z" fill="#1490df"/><path d="M14 1h8v6h-8z" fill="#50d9ff"/><path d="M7 7h7v7H7z" fill="#0f5ba8"/><path d="M5 11l9.500 6L24 11v11H5z" fill="#1a8fe0"/><path d="M5 22 24 11v11z" fill="#35b8f1"/><rect y="6" width="13" height="13" rx="1" fill="#0f6cbd"/><circle cx="6.500" cy="12.500" r="3" fill="none" stroke="#fff" stroke-width="1.700"/></svg>Inbox ...</span></button>
    </div>
    <div class="ml-auto flex h-full items-center">
      <svg class="size-[14px] rotate-180"><use href="#chev"/></svg>
      <svg class="ml-[9px] h-4 w-4" viewBox="0 0 16 16"><path d="M4 13a3.500 3.500 0 0 1-.5-7A4.500 4.500 0 0 1 12 6.500 3.300 3.300 0 0 1 12.500 13z" fill="#1490df"/><path d="M4 13a3.500 3.500 0 0 1-.5-7l8 7z" fill="#0f6cbd"/></svg>
      <svg class="ml-2 size-4" viewBox="0 0 16 16" fill="none" stroke="#fff"><path d="M5 3.500h10.500v8H4V7M7 14.500h6M10 11.500v3"/><rect x=".5" y="1.500" width="4" height="4"/></svg>
      <svg class="ml-2 size-4" viewBox="0 0 16 16" fill="none" stroke="#fff"><path d="M.5 6h2l3-3v10l-3-3h-2zM8 6c1 1.300 1 2.700 0 4M10.500 4.500c1.800 2 1.800 5 0 7M13 3c2.700 3 2.700 7 0 10"/></svg>
      <div class="ml-[6px] flex w-[60px] flex-col items-center whitespace-nowrap text-[11px] leading-[18px]"><span>12:00 PM</span><span>7/11/2025</span></div>
      <svg class="ml-[13px] size-6" viewBox="0 0 24 24"><path d="M1 2h16v12H7l-3 3v-3H1z" fill="#fff"/><path d="M4 5.500h10M4 8h10M4 10.500h6" stroke="#1a2744"/><circle cx="16.500" cy="16" r="7" fill="#333" stroke="#888"/><text x="16.500" y="19.500" fill="#fff" font-size="10" font-weight="700" text-anchor="middle">7</text></svg>
      <span class="ml-[14px] mr-[3px] h-full w-px bg-[#6d7688]"></span>
    </div>
  </footer>
</div>

<!-- Time tracker overlay -->
<aside class="fixed bottom-[50px] right-[15px] flex w-40 flex-col gap-[2px] bg-[#3c3c3c]/85 px-1 pb-1 pt-1 text-[12px] font-semibold text-white">
  <button class="mb-[7px] h-[18px] w-[69px] self-end bg-[#646464] text-[11px] font-normal">Open App ↗</button>
  <div class="bg-[#7fc6cc] pl-[10px] leading-[27px]">Working Status: Active</div>
  <div class="bg-[#5fd68c] pl-[10px] leading-[27px]">Active: 18:41:03</div>
  <div class="bg-[#ef7469] pl-[10px] leading-[27px]">In Active: 00:16:46</div>
</aside>
</body>
</html>
